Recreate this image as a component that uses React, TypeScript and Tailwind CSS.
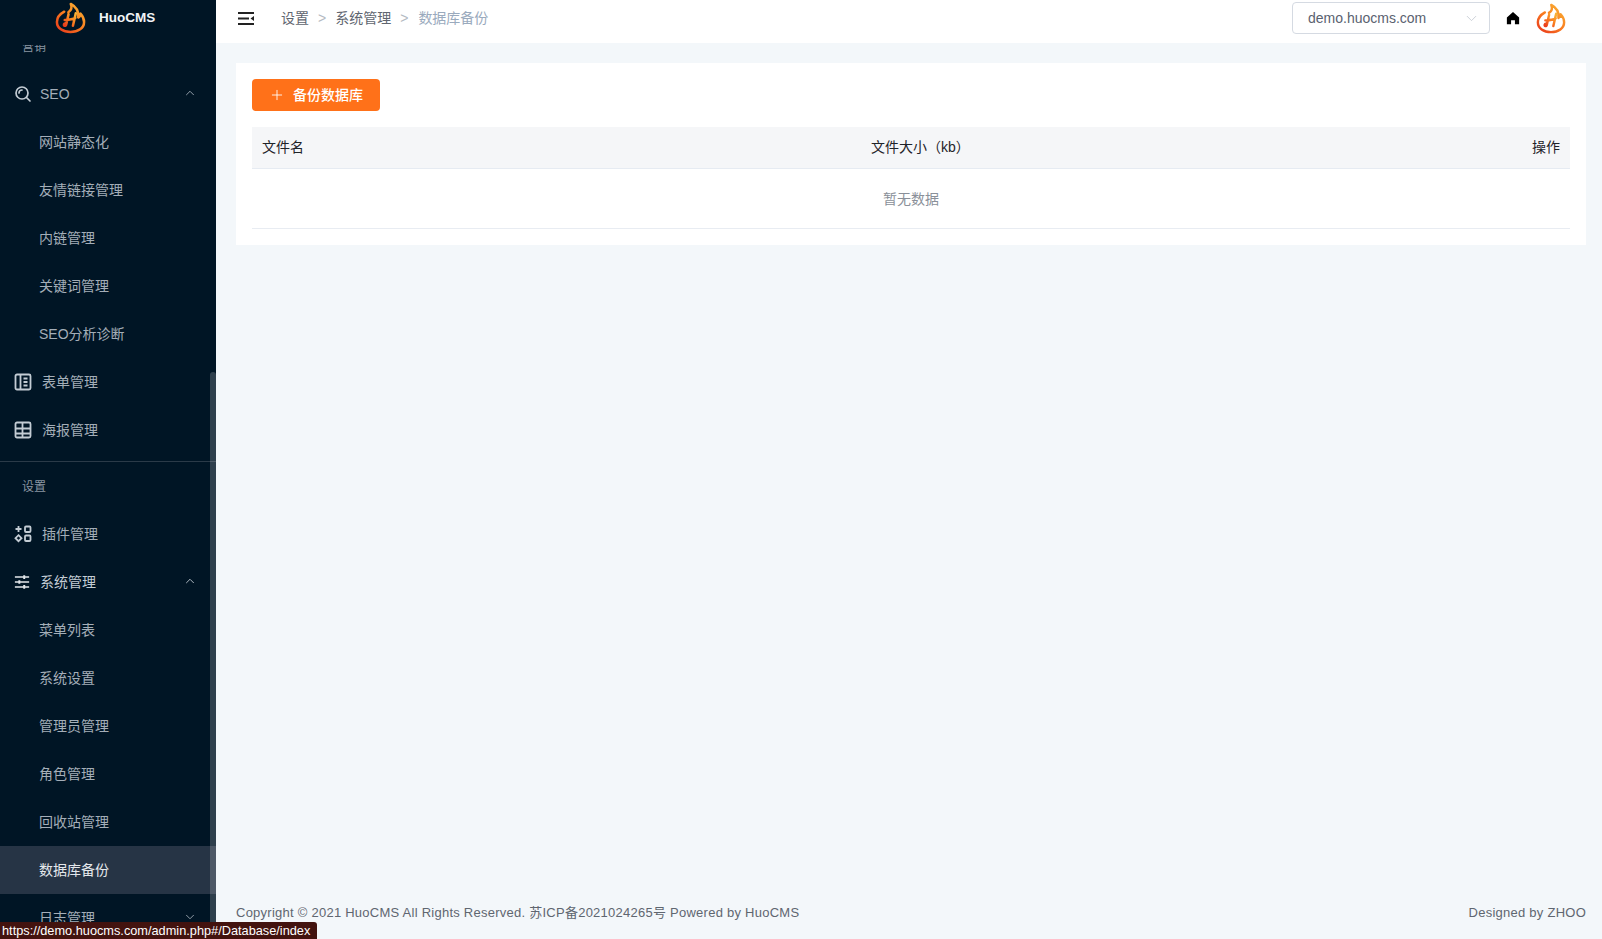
import React from 'react';
import { ChevronUp, ChevronDown, Plus } from 'lucide-react';

const FONT = "font-['Liberation_Sans','Noto_Sans_CJK_SC',sans-serif]";

// flame logo with the slanted H in the middle
const Logo = ({ id, className }: { id: string; className: string }) => (
  <svg viewBox="0 0 32 32" className={className} fill="none">
    <defs>
      <linearGradient id={id} x1="0.9" y1="0" x2="0.1" y2="1">
        <stop offset="0" stopColor="#f9b233" />
        <stop offset="0.55" stopColor="#f9791f" />
        <stop offset="1" stopColor="#ea3d1c" />
      </linearGradient>
    </defs>
    <path
      d="M9.500 9.500C5 12 2 15.500 2 20c0 6.500 6.200 10.500 14 10.500S30 26.500 30 20c0-3.500-1.500-6-3.700-8.500 0 2-.8 3.200-2.300 4 .6-5.500-2-11-7.700-14 1.500 3.500.5 6.500-2.500 8.500"
      stroke={`url(#${id})`}
      strokeWidth="2.600"
      strokeLinecap="round"
      strokeLinejoin="round"
    />
    <path
      d="M14 12 11.500 23c-.4 1.800-2.800 1.200-2.200-.5.4-1 1.500-1.200 2.400-.6M21.500 11 18.500 24M10 18c3-.2 8-.6 11-2.200"
      stroke={`url(#${id})`}
      strokeWidth="2.600"
      strokeLinecap="round"
    />
  </svg>
);

const iconClass = 'w-[18px] h-[18px] shrink-0 text-[#c3ccd4]';

const SearchIcon = () => (
  <svg viewBox="0 0 18 18" className={iconClass} fill="none" stroke="currentColor" strokeWidth="1.700">
    <circle cx="8" cy="8" r="6" />
    <path d="M12.500 12.500 16 16M5 8a3 3 0 0 1 3-3" strokeLinecap="round" />
  </svg>
);

const FormIcon = () => (
  <svg viewBox="0 0 18 18" className={iconClass} fill="none" stroke="currentColor" strokeWidth="1.800">
    <rect x="1.500" y="1.500" width="15" height="15" rx="1.500" />
    <path d="M6.500 2v14M9.500 5.500h4M9.500 9h4M9.500 12.500h4" />
  </svg>
);

const TableIcon = () => (
  <svg viewBox="0 0 18 18" className={iconClass} fill="none" stroke="currentColor" strokeWidth="1.800">
    <rect x="1.500" y="1.500" width="15" height="15" rx="1.500" />
    <path d="M1.500 7.500h15M1.500 12.500h15M8.500 2v14" />
  </svg>
);

const PluginIcon = () => (
  <svg viewBox="0 0 18 18" className={iconClass} fill="none" stroke="currentColor" strokeWidth="1.800">
    <path d="M4.500 1v6M1.500 4h6" />
    <rect x="11" y="1.500" width="5.500" height="5.500" rx="1" />
    <rect x="11" y="10.500" width="5.500" height="5.500" rx="1" />
    <path d="M4.500 10.200 7.500 13.200 4.500 16.200 1.500 13.200Z" />
  </svg>
);

const SlidersIcon = () => (
  <svg viewBox="0 0 18 18" className="w-4 h-4 shrink-0 text-[#e4e8ec]" fill="none" stroke="currentColor" strokeWidth="1.700">
    <path d="M1 3.500h16M1 9h16M1 14.500h16" />
    <path d="M11.500 1.500v4M6 7v4M11.500 12.500v4" strokeWidth="2.200" />
  </svg>
);

const MenuRow = ({ icon, label, open, closed, gap = 'gap-[10px]', light }: any) => (
  <div className={`h-12 flex items-center pl-[14px] pr-[19px] ${gap} ${light ? 'text-[#c3ccd4]' : ''}`}>
    {icon}
    <span className="flex-1">{label}</span>
    {open && <ChevronUp className="w-[14px] h-[14px] -mt-[2px]" strokeWidth={1.500} />}
    {closed && <ChevronDown className="w-[14px] h-[14px] -mt-[2px]" strokeWidth={1.500} />}
  </div>
);

const SubRow = ({ label, active }: { label: string; active?: boolean }) => (
  <div className={`h-12 flex items-center pl-[39px] ${active ? 'bg-[#263445] text-[#e4e8ec]' : ''}`}>{label}</div>
);

const GroupLabel = ({ label }: { label: string }) => (
  <div className="h-12 pt-[2px] flex items-center pl-[22px] text-xs text-[#8a96a2]">{label}</div>
);

const Sidebar = () => (
  <aside className="relative w-[216px] shrink-0 h-full bg-[#001525] text-sm text-[#a4aeb8] flex flex-col overflow-hidden">
    <div className="h-[45px] shrink-0 flex items-start pl-[55px] gap-[13px] bg-[#001525] z-10">
      <Logo id="logo-side" className="w-[31px] h-[32px] mt-[2px]" />
      <span className="mt-[8px] text-[13.5px] font-bold text-[#f2f4f6]">HuoCMS</span>
    </div>
    <div className="-mt-[23px] flex-1 min-h-0">
      <GroupLabel label="营销" />
      <MenuRow icon={<SearchIcon />} label="SEO" open gap="gap-[8px]" />
      <SubRow label="网站静态化" />
      <SubRow label="友情链接管理" />
      <SubRow label="内链管理" />
      <SubRow label="关键词管理" />
      <SubRow label="SEO分析诊断" />
      <MenuRow icon={<FormIcon />} label="表单管理" />
      <MenuRow icon={<TableIcon />} label="海报管理" />
      <div className="h-px mt-[7px] bg-[#2a3a48]" />
      <GroupLabel label="设置" />
      <MenuRow icon={<PluginIcon />} label="插件管理" />
      <MenuRow icon={<SlidersIcon />} label="系统管理" open light />
      <SubRow label="菜单列表" />
      <SubRow label="系统设置" />
      <SubRow label="管理员管理" />
      <SubRow label="角色管理" />
      <SubRow label="回收站管理" />
      <SubRow label="数据库备份" active />
      <MenuRow label={<span className="pl-[25px]">日志管理</span>} closed gap="gap-0" />
    </div>
    {/* scrollbar thumb */}
    <div className="absolute right-0 top-[372px] bottom-0 w-[6px] rounded-t-[3px] bg-[#ffffff2e]" />
  </aside>
);

const Header = () => (
  <header className="h-[43px] shrink-0 bg-white flex items-center pl-[22px] pr-[36px] pb-[7px]">
    <svg viewBox="0 0 16 13" className="w-4 h-[13px] shrink-0" fill="#222">
      <rect width="16" height="2" />
      <rect y="5.500" width="11" height="2" />
      <rect y="11" width="16" height="2" />
      <path d="M16 4v5l-3.500-2.500Z" />
    </svg>
    <nav className="ml-[27px] flex items-center text-sm text-[#5f6670]">
      <span>设置</span>
      <span className="mx-[9px] text-[#b4bac2]">&gt;</span>
      <span>系统管理</span>
      <span className="ml-[9px] mr-[10px] text-[#b4bac2]">&gt;</span>
      <span className="text-[#9aaabd]">数据库备份</span>
    </nav>
    <div className="ml-auto w-[198px] h-8 border border-[#d5dae2] rounded flex items-center justify-between pl-[15px] pr-[9px] text-sm text-[#5a6270]">
      <span>demo.huocms.com</span>
      <ChevronDown className="w-[17px] h-[17px] text-[#c4c9d1]" strokeWidth={1.200} />
    </div>
    <svg viewBox="0 0 16 16" className="w-[14px] h-[14px] ml-4" fill="#000">
      <path d="M8 1 1 7.500V15h4.800v-4.500h4.400V15H15V7.500Z" />
    </svg>
    <Logo id="logo-top" className="w-[30px] h-[31px] ml-[16px]" />
  </header>
);

const BackupTable = () => (
  <div className="text-sm">
    <div className="h-[42px] grid grid-cols-[609px_1fr_auto] items-center pb-[2px] bg-[#f5f6f8] border-b border-[#e6ebf2] text-[#1f2329]">
      <div className="pl-[10px]">文件名</div>
      <div className="pl-[10px]">文件大小（kb）</div>
      <div className="pr-[10px]">操作</div>
    </div>
    <div className="h-[60px] flex items-center justify-center border-b border-[#e8ecf2] text-[#8a9099]">暂无数据</div>
  </div>
);

export default function App() {
  return (
    <div className={`relative h-screen flex overflow-hidden bg-[#f3f7fa] ${FONT}`}>
      <Sidebar />
      <div className="flex-1 min-w-0 flex flex-col">
        <Header />
        <main className="flex-1 pl-5 pr-4 pt-5">
          <div className="bg-white px-4 pt-4 pb-4">
            <button className="w-[128px] h-8 mb-4 rounded bg-[#ff7119] text-white text-sm font-medium flex items-center pl-[17px] gap-[8px]">
              <Plus className="w-4 h-4" strokeWidth={1.300} />
              备份数据库
            </button>
            <BackupTable />
          </div>
        </main>
        <footer className="h-[54px] shrink-0 pl-5 pr-4 flex justify-between text-[13px] tracking-[0.25px] text-[#5f6670] pt-[18px]">
          <span>Copyright © 2021 HuoCMS All Rights Reserved. 苏ICP备2021024265号 Powered by HuoCMS</span>
          <span>Designed by ZHOO</span>
        </footer>
      </div>
      {/* browser link status bubble */}
      <div className="absolute left-0 bottom-0 w-[317px] h-[17px] pl-[2px] bg-[#43130f] rounded-tr-[3px] text-[12.75px] leading-[18px] text-white font-['Liberation_Sans',sans-serif]">
        https://demo.huocms.com/admin.php#/Database/index
      </div>
    </div>
  );
}
